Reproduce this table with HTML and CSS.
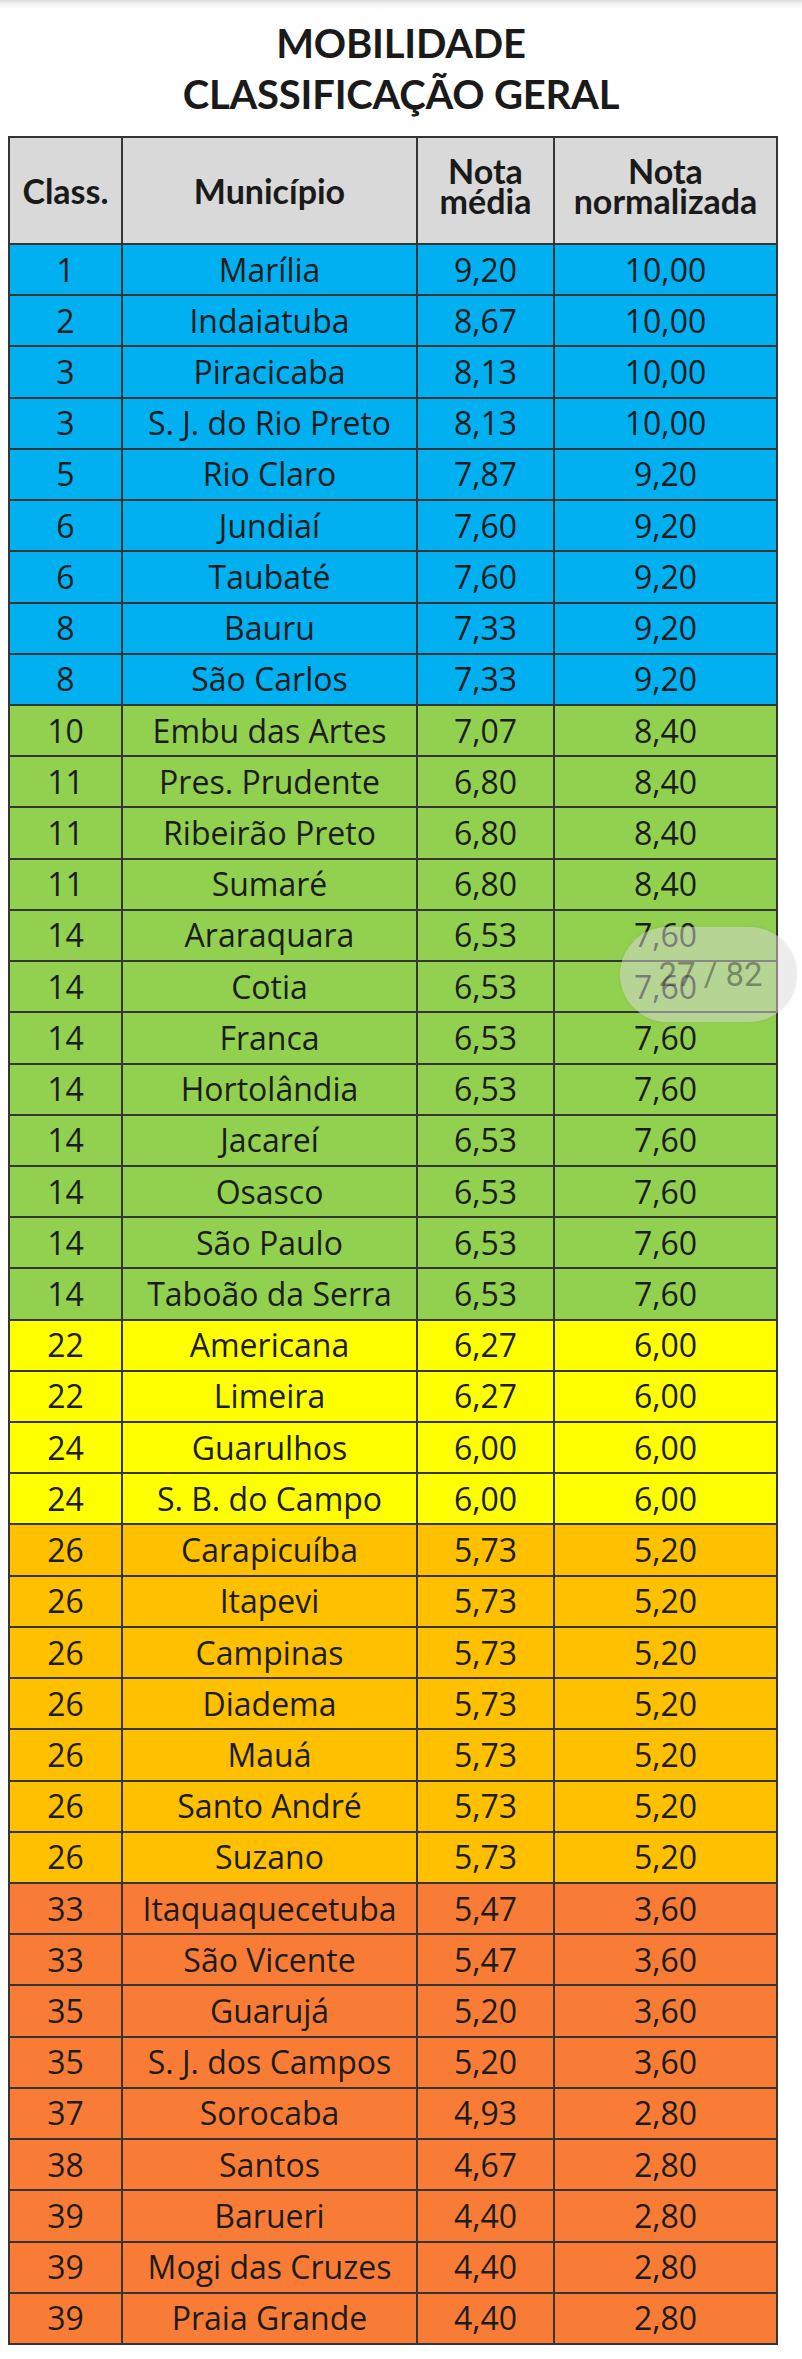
FILE: index.html
```html
<!DOCTYPE html>
<html lang="pt-BR">
<head>
<meta charset="utf-8">
<title>Mobilidade - Classificação Geral</title>
<link rel="stylesheet" href="styles.css">
</head>
<body>
<div class="topshade"></div>
<h1 class="title">MOBILIDADE<br>CLASSIFICAÇÃO GERAL</h1>
<div class="table">
  <div class="row head">
    <div class="cell">Class.</div>
    <div class="cell">Município</div>
    <div class="cell two">Nota<br>média</div>
    <div class="cell two">Nota<br>normalizada</div>
  </div>
  <div class="row blue"><div class="cell">1</div><div class="cell">Marília</div><div class="cell">9,20</div><div class="cell">10,00</div></div>
  <div class="row blue"><div class="cell">2</div><div class="cell">Indaiatuba</div><div class="cell">8,67</div><div class="cell">10,00</div></div>
  <div class="row blue"><div class="cell">3</div><div class="cell">Piracicaba</div><div class="cell">8,13</div><div class="cell">10,00</div></div>
  <div class="row blue"><div class="cell">3</div><div class="cell">S. J. do Rio Preto</div><div class="cell">8,13</div><div class="cell">10,00</div></div>
  <div class="row blue"><div class="cell">5</div><div class="cell">Rio Claro</div><div class="cell">7,87</div><div class="cell">9,20</div></div>
  <div class="row blue"><div class="cell">6</div><div class="cell">Jundiaí</div><div class="cell">7,60</div><div class="cell">9,20</div></div>
  <div class="row blue"><div class="cell">6</div><div class="cell">Taubaté</div><div class="cell">7,60</div><div class="cell">9,20</div></div>
  <div class="row blue"><div class="cell">8</div><div class="cell">Bauru</div><div class="cell">7,33</div><div class="cell">9,20</div></div>
  <div class="row blue"><div class="cell">8</div><div class="cell">São Carlos</div><div class="cell">7,33</div><div class="cell">9,20</div></div>
  <div class="row green"><div class="cell">10</div><div class="cell">Embu das Artes</div><div class="cell">7,07</div><div class="cell">8,40</div></div>
  <div class="row green"><div class="cell">11</div><div class="cell">Pres. Prudente</div><div class="cell">6,80</div><div class="cell">8,40</div></div>
  <div class="row green"><div class="cell">11</div><div class="cell">Ribeirão Preto</div><div class="cell">6,80</div><div class="cell">8,40</div></div>
  <div class="row green"><div class="cell">11</div><div class="cell">Sumaré</div><div class="cell">6,80</div><div class="cell">8,40</div></div>
  <div class="row green"><div class="cell">14</div><div class="cell">Araraquara</div><div class="cell">6,53</div><div class="cell">7,60</div></div>
  <div class="row green"><div class="cell">14</div><div class="cell">Cotia</div><div class="cell">6,53</div><div class="cell">7,60</div></div>
  <div class="row green"><div class="cell">14</div><div class="cell">Franca</div><div class="cell">6,53</div><div class="cell">7,60</div></div>
  <div class="row green"><div class="cell">14</div><div class="cell">Hortolândia</div><div class="cell">6,53</div><div class="cell">7,60</div></div>
  <div class="row green"><div class="cell">14</div><div class="cell">Jacareí</div><div class="cell">6,53</div><div class="cell">7,60</div></div>
  <div class="row green"><div class="cell">14</div><div class="cell">Osasco</div><div class="cell">6,53</div><div class="cell">7,60</div></div>
  <div class="row green"><div class="cell">14</div><div class="cell">São Paulo</div><div class="cell">6,53</div><div class="cell">7,60</div></div>
  <div class="row green"><div class="cell">14</div><div class="cell">Taboão da Serra</div><div class="cell">6,53</div><div class="cell">7,60</div></div>
  <div class="row yellow"><div class="cell">22</div><div class="cell">Americana</div><div class="cell">6,27</div><div class="cell">6,00</div></div>
  <div class="row yellow"><div class="cell">22</div><div class="cell">Limeira</div><div class="cell">6,27</div><div class="cell">6,00</div></div>
  <div class="row yellow"><div class="cell">24</div><div class="cell">Guarulhos</div><div class="cell">6,00</div><div class="cell">6,00</div></div>
  <div class="row yellow"><div class="cell">24</div><div class="cell">S. B. do Campo</div><div class="cell">6,00</div><div class="cell">6,00</div></div>
  <div class="row orange"><div class="cell">26</div><div class="cell">Carapicuíba</div><div class="cell">5,73</div><div class="cell">5,20</div></div>
  <div class="row orange"><div class="cell">26</div><div class="cell">Itapevi</div><div class="cell">5,73</div><div class="cell">5,20</div></div>
  <div class="row orange"><div class="cell">26</div><div class="cell">Campinas</div><div class="cell">5,73</div><div class="cell">5,20</div></div>
  <div class="row orange"><div class="cell">26</div><div class="cell">Diadema</div><div class="cell">5,73</div><div class="cell">5,20</div></div>
  <div class="row orange"><div class="cell">26</div><div class="cell">Mauá</div><div class="cell">5,73</div><div class="cell">5,20</div></div>
  <div class="row orange"><div class="cell">26</div><div class="cell">Santo André</div><div class="cell">5,73</div><div class="cell">5,20</div></div>
  <div class="row orange"><div class="cell">26</div><div class="cell">Suzano</div><div class="cell">5,73</div><div class="cell">5,20</div></div>
  <div class="row red"><div class="cell">33</div><div class="cell">Itaquaquecetuba</div><div class="cell">5,47</div><div class="cell">3,60</div></div>
  <div class="row red"><div class="cell">33</div><div class="cell">São Vicente</div><div class="cell">5,47</div><div class="cell">3,60</div></div>
  <div class="row red"><div class="cell">35</div><div class="cell">Guarujá</div><div class="cell">5,20</div><div class="cell">3,60</div></div>
  <div class="row red"><div class="cell">35</div><div class="cell">S. J. dos Campos</div><div class="cell">5,20</div><div class="cell">3,60</div></div>
  <div class="row red"><div class="cell">37</div><div class="cell">Sorocaba</div><div class="cell">4,93</div><div class="cell">2,80</div></div>
  <div class="row red"><div class="cell">38</div><div class="cell">Santos</div><div class="cell">4,67</div><div class="cell">2,80</div></div>
  <div class="row red"><div class="cell">39</div><div class="cell">Barueri</div><div class="cell">4,40</div><div class="cell">2,80</div></div>
  <div class="row red"><div class="cell">39</div><div class="cell">Mogi das Cruzes</div><div class="cell">4,40</div><div class="cell">2,80</div></div>
  <div class="row red"><div class="cell">39</div><div class="cell">Praia Grande</div><div class="cell">4,40</div><div class="cell">2,80</div></div>
</div>
<div class="pager">27 / 82</div>
</body>
</html>
```

FILE: styles.css
```css
html, body {
  margin: 0;
  padding: 0;
  background: #ffffff;
}

body {
  width: 802px;
  min-height: 2359px;
  position: relative;
  color: #1a1a1a;
}

.topshade {
  position: absolute;
  left: 0;
  top: 0;
  width: 802px;
  height: 10px;
  background: linear-gradient(to bottom, rgba(0,0,0,0.13), rgba(0,0,0,0.03) 50%, rgba(0,0,0,0));
}

.title {
  margin: 18px 0 0 0;
  font-family: "Lato", "Liberation Sans", sans-serif;
  font-weight: 700;
  font-size: 40px;
  line-height: 51px;
  text-align: center;
  color: #1a1a1a;
  letter-spacing: -0.2px;
}

.table {
  margin: 16px 0 0 8px;
  width: 770px;
  box-sizing: border-box;
  border-left: 2px solid #353535;
  border-top: 2px solid #353535;
}

.row {
  display: grid;
  grid-template-columns: 113px 295px 137px 223px;
  height: 51.22px;
}

.cell {
  box-sizing: border-box;
  border-right: 2px solid #353535;
  border-bottom: 2px solid #353535;
  display: flex;
  align-items: center;
  justify-content: center;
  text-align: center;
  font-family: "Open Sans", "Liberation Sans", sans-serif;
  font-size: 32px;
  line-height: 1;
  color: #1c1c1c;
  white-space: nowrap;
}

.head {
  height: 107px;
  background: #d9d9d9;
}

.head .cell {
  font-family: "Lato", "Liberation Sans", sans-serif;
  font-weight: 700;
  font-size: 34px;
  line-height: 30px;
  color: #1a1a1a;
}

.head .cell.two {
  padding-bottom: 9px;
}

.blue { background: #00b0f0; }
.green { background: #92d050; }
.yellow { background: #ffff00; }
.orange { background: #ffc000; }
.red { background: #f97c36; }

.pager {
  position: absolute;
  left: 620px;
  top: 927px;
  width: 177px;
  height: 95px;
  border-radius: 48px;
  background: rgba(217,217,217,0.5);
  box-shadow: 0 0 4px rgba(0,0,0,0.06);
  display: flex;
  align-items: center;
  justify-content: center;
  font-family: "Roboto", "Liberation Sans", sans-serif;
  font-size: 33px;
  color: rgba(40,40,40,0.45);
  padding-left: 4px;
  box-sizing: border-box;
}
```
